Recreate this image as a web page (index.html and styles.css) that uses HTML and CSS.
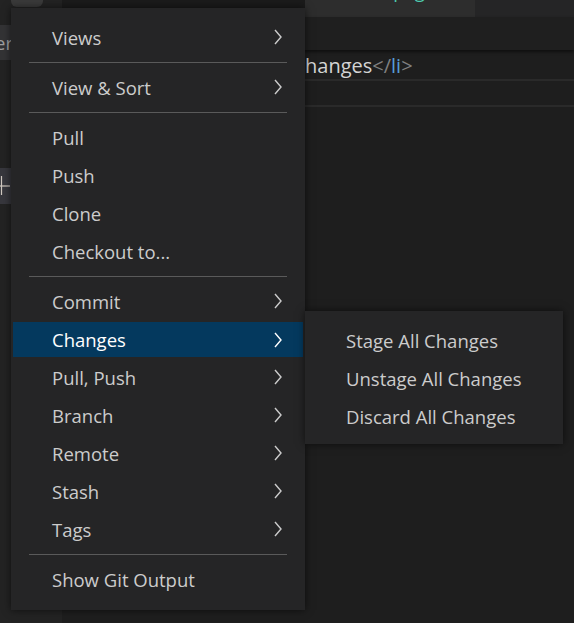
FILE: index.html
```html
<!DOCTYPE html>
<html>
<head>
<meta charset="utf-8">
<link rel="stylesheet" href="styles.css">
</head>
<body>
<div class="workbench">
  <div class="sidebar">
    <div class="side-top">
      <div class="side-btn"></div>
    </div>
    <div class="side-row"><span class="side-text">Explorer</span></div>
    <div class="side-gap"></div>
    <div class="side-plus"><svg class="plus" viewBox="0 0 11 36"><line x1="-7" y1="18" x2="10" y2="18"/><line x1="1.5" y1="8" x2="1.5" y2="27"/></svg></div>
  </div>
  <div class="editor">
    <div class="tabs">
      <div class="tab-spacer"></div>
      <div class="tab"><span class="tab-text">index.page</span></div>
      <div class="tab-rest"></div>
    </div>
    <div class="breadcrumbs"></div>
    <div class="code">
      <div class="line"><span class="hidden-part"><span class="in">Stage All C</span></span><span class="txt">hanges</span><span class="punc">&lt;/</span><span class="tag">li</span><span class="punc">&gt;</span></div>
      <div class="line current"></div>
    </div>
  </div>
</div>

<div class="menu main-menu">
  <div class="item sub"><span class="label">Views</span><svg class="chev" viewBox="0 0 10 16"><polyline points="2,1 8,8 2,15"/></svg></div>
  <div class="sep"></div>
  <div class="item sub"><span class="label">View &amp; Sort</span><svg class="chev" viewBox="0 0 10 16"><polyline points="2,1 8,8 2,15"/></svg></div>
  <div class="sep"></div>
  <div class="item"><span class="label">Pull</span></div>
  <div class="item"><span class="label">Push</span></div>
  <div class="item"><span class="label">Clone</span></div>
  <div class="item"><span class="label">Checkout to...</span></div>
  <div class="sep"></div>
  <div class="item sub"><span class="label">Commit</span><svg class="chev" viewBox="0 0 10 16"><polyline points="2,1 8,8 2,15"/></svg></div>
  <div class="item sub active"><span class="label">Changes</span><svg class="chev" viewBox="0 0 10 16"><polyline points="2,1 8,8 2,15"/></svg></div>
  <div class="item sub"><span class="label">Pull, Push</span><svg class="chev" viewBox="0 0 10 16"><polyline points="2,1 8,8 2,15"/></svg></div>
  <div class="item sub"><span class="label">Branch</span><svg class="chev" viewBox="0 0 10 16"><polyline points="2,1 8,8 2,15"/></svg></div>
  <div class="item sub"><span class="label">Remote</span><svg class="chev" viewBox="0 0 10 16"><polyline points="2,1 8,8 2,15"/></svg></div>
  <div class="item sub"><span class="label">Stash</span><svg class="chev" viewBox="0 0 10 16"><polyline points="2,1 8,8 2,15"/></svg></div>
  <div class="item sub"><span class="label">Tags</span><svg class="chev" viewBox="0 0 10 16"><polyline points="2,1 8,8 2,15"/></svg></div>
  <div class="sep"></div>
  <div class="item"><span class="label">Show Git Output</span></div>
</div>

<div class="menu sub-menu">
  <div class="item"><span class="label">Stage All Changes</span></div>
  <div class="item"><span class="label">Unstage All Changes</span></div>
  <div class="item"><span class="label">Discard All Changes</span></div>
</div>
</body>
</html>
```

FILE: styles.css
```css
html, body {
  margin: 0;
  padding: 0;
  width: 574px;
  height: 623px;
  overflow: hidden;
  background: #1e1e1e;
  font-family: "Open Sans", "Noto Sans", sans-serif;
}

body {
  position: relative;
}

.workbench {
  display: flex;
  width: 574px;
  height: 623px;
}

.sidebar {
  width: 62px;
  flex: none;
  background: #232323;
  display: flex;
  flex-direction: column;
}

.side-top {
  height: 25px;
  padding-left: 11px;
}

.side-btn {
  width: 32px;
  height: 7px;
  background: #3a3a3a;
  border-radius: 0 0 6px 6px;
}

.side-row {
  height: 35px;
  background: #333335;
  overflow: hidden;
  white-space: nowrap;
  display: flex;
  align-items: center;
  justify-content: flex-end;
  width: 11px;
}

.side-text {
  color: #a0a0a0;
  font-size: 18.5px;
  margin-right: -2px;
}

.side-gap {
  height: 108px;
}

.side-plus {
  width: 11px;
  height: 36px;
  background: #37373d;
  overflow: hidden;
}

.plus {
  display: block;
  width: 11px;
  height: 36px;
  stroke: #d0c8c0;
  stroke-width: 1.2;
}

.editor {
  flex: 1;
  display: flex;
  flex-direction: column;
  background: #1e1e1e;
}

.tabs {
  height: 17px;
  display: flex;
  background: #1b1b1b;
  flex: none;
}

.tab-spacer {
  width: 243px;
}

.tab {
  width: 170px;
  background: #2d2d2d;
  overflow: hidden;
}

.tab-text {
  color: #4ec9b0;
  font-size: 18.5px;
  display: block;
  margin-top: -22px;
  padding-left: 36px;
}

.tab-rest {
  flex: 1;
  background: #252526;
}

.breadcrumbs {
  height: 33px;
  background: #1f1f1f;
  box-shadow: 0 2px 3px rgba(0, 0, 0, 0.5);
  flex: none;
  position: relative;
}

.code {
  padding-top: 3px;
}

.line {
  height: 26px;
  font-size: 20px;
  line-height: 26px;
  white-space: nowrap;
  color: #d4d4d4;
  display: flex;
}

.hidden-part {
  width: 243px;
  flex: none;
  overflow: hidden;
  display: flex;
  justify-content: flex-end;
}

.in {
  flex: none;
}

.line.current {
  border-top: 2px solid #2a2a2a;
  border-bottom: 2px solid #2a2a2a;
  height: 24px;
}

.punc { color: #808080; }
.tag { color: #569cd6; }

.menu {
  position: absolute;
  background: #252526;
  box-shadow: 0 0 8px rgba(0, 0, 0, 0.6);
  color: #cccccc;
  font-size: 18.5px;
}

.main-menu {
  left: 11px;
  top: 8px;
  width: 294px;
  padding: 10px 0 12px;
}

.sub-menu {
  left: 305px;
  top: 311px;
  width: 258px;
  padding: 10px 0 9px;
}

.item {
  height: 38px;
  display: flex;
  align-items: center;
  padding: 0 20px 0 39px;
  margin: 0 2px;
  box-sizing: border-box;
}

.sub-menu .item {
  padding-left: 41px;
  margin: 0;
}

.item.active {
  background: #04395e;
  color: #ffffff;
  height: 35px;
  margin-top: 2px;
  margin-bottom: 1px;
}

.label {
  flex: 1;
  white-space: nowrap;
}

.chev {
  width: 10px;
  height: 16px;
  fill: none;
  stroke: currentColor;
  stroke-width: 1.4;
}

.sep {
  height: 1px;
  background: #5a5a5a;
  margin: 6px 18px 5px;
}
```
